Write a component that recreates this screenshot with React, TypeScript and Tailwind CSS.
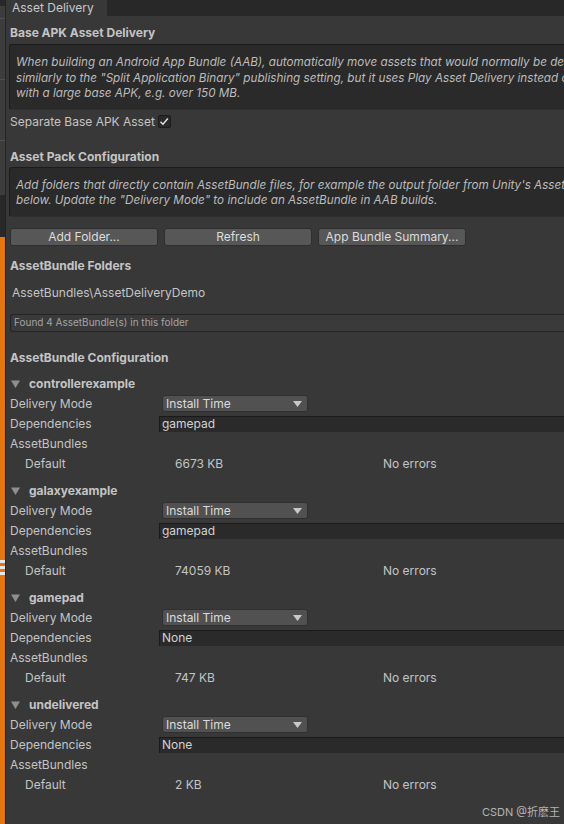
import React from 'react';

const font = { fontFamily: 'Inter, "Noto Sans", "Noto Sans CJK SC", sans-serif' };

type Bundle = { name: string; deps: string; size: string };

const bundles: Bundle[] = [
  { name: 'controllerexample', deps: 'gamepad', size: '6673 KB' },
  { name: 'galaxyexample', deps: 'gamepad', size: '74059 KB' },
  { name: 'gamepad', deps: 'None', size: '747 KB' },
  { name: 'undelivered', deps: 'None', size: '2 KB' },
];

function Heading({ children, className = '' }: { children: React.ReactNode; className?: string }) {
  return (
    <div className={`h-[18px] flex items-center pl-[4px] text-[12px] font-bold text-[#c4c4c4] whitespace-nowrap ${className}`}>
      {children}
    </div>
  );
}

function HelpBox({ lines, className = '' }: { lines: string[]; className?: string }) {
  return (
    <div
      className={`ml-[3px] rounded-l-[3px] bg-[#2a2a2a] border-t border-l border-[#1c1c1c] border-b-[#2f2f2f] border-b pt-[10px] pb-[7px] pl-[6px] overflow-hidden ${className}`}
    >
      {lines.map((l) => (
        <div key={l} className="h-[15.5px] leading-[15.5px] text-[11.7px] italic text-[#bcbcbc] whitespace-nowrap">
          {l}
        </div>
      ))}
    </div>
  );
}

function Button({ label }: { label: string }) {
  return (
    <div className="w-[148px] h-[18px] rounded-[3px] bg-[#575757] border border-[#2e2e2e] flex items-center justify-center text-[12px] text-[#dcdcdc]">
      {label}
    </div>
  );
}

function Row({ label, children }: { label: string; children?: React.ReactNode }) {
  return (
    <div className="h-[20px] flex items-center text-[12px] text-[#c4c4c4] whitespace-nowrap">
      <div className="w-[153px] pl-[4px] shrink-0">{label}</div>
      {children}
    </div>
  );
}

function BundleGroup({ b }: { b: Bundle }) {
  return (
    <div className="mt-[7px]">
      <div className="h-[20px] flex items-center text-[12px] font-bold text-[#c4c4c4]">
        <svg width="9" height="8" viewBox="0 0 9 8" className="ml-[5px] mr-[9px]">
          <path d="M0 0.5 H9 L4.5 8 Z" fill="#8f8f8f" />
        </svg>
        {b.name}
      </div>
      <Row label="Delivery Mode">
        <div className="ml-[3px] w-[146px] h-[17px] rounded-[3px] bg-[#515151] border border-[#303030] flex items-center justify-between pl-[3px] pr-[5px] text-[#dcdcdc]">
          <span>Install Time</span>
          <svg width="9" height="6" viewBox="0 0 9 6">
            <path d="M0 0 H9 L4.5 6 Z" fill="#c8c8c8" />
          </svg>
        </div>
      </Row>
      <Row label="Dependencies">
        <div className="flex-1 h-[16px] bg-[#2a2a2a] border-t border-l border-[#1a1a1a] flex items-center pl-[2px] text-[#d2d2d2]">
          {b.deps}
        </div>
      </Row>
      <Row label="AssetBundles" />
      <div className="h-[20px] flex items-center text-[12px] text-[#c4c4c4] whitespace-nowrap">
        <div className="w-[169px] pl-[19px] shrink-0">Default</div>
        <div className="w-[208px] shrink-0">{b.size}</div>
        <div>No errors</div>
      </div>
    </div>
  );
}

export default function App() {
  return (
    <div className="w-[564px] h-[824px] overflow-hidden flex bg-[#383838] relative" style={font}>
      {/* neighbouring window edge */}
      <div className="w-[6px] shrink-0 flex flex-col border-r border-[#232323]">
        <div className="h-[6px] bg-[#282828]" />
        <div className="h-[189px] bg-[#3d3d3d] flex flex-col">
          <div className="h-[12px]" />
          <div className="h-px bg-[#505050]" />
          <div className="h-[60px]" />
          <div className="h-px bg-[#505050]" />
          <div className="h-[60px]" />
          <div className="h-px bg-[#505050]" />
        </div>
        <div className="h-[42px] bg-[#282828]" />
        <div className="flex-1 bg-[#e3760f] flex flex-col">
          <div className="h-[323px]" />
          <div className="h-[3px] bg-[#e8e8e8]" />
          <div className="h-[3px]" />
          <div className="h-[3px] bg-[#e8e8e8]" />
          <div className="h-[3px]" />
          <div className="h-[3px] bg-[#e8e8e8]" />
        </div>
      </div>

      <div className="flex-1 flex flex-col min-w-0">
        {/* tab bar */}
        <div className="h-[16px] shrink-0 bg-[#282828] flex">
          <div className="w-[101px] bg-[#383838] pl-[6px] text-[12px] leading-[16px] text-[#c8c8c8] whitespace-nowrap">
            Asset Delivery
          </div>
        </div>

        <Heading className="mt-[8px]">Base APK Asset Delivery</Heading>
        <HelpBox
          className="mt-[2px]"
          lines={[
            'When building an Android App Bundle (AAB), automatically move assets that would normally be delivered in the base APK into a separate asset pack. This behaves',
            'similarly to the "Split Application Binary" publishing setting, but it uses Play Asset Delivery instead of APK expansion files. Recommended for apps',
            'with a large base APK, e.g. over 150 MB.',
          ]}
        />
        <div className="mt-[3px] h-[18px] flex items-center pl-[4px] text-[12px] text-[#c4c4c4] whitespace-nowrap">
          Separate Base APK Asset
          <div className="ml-[3px] w-[13px] h-[13px] rounded-[2px] bg-[#2a2a2a] border border-[#1b1b1b] flex items-center justify-center">
            <svg width="10" height="9" viewBox="0 0 10 9">
              <path d="M1.5 4.8 L4 7.2 L8.8 1.5" stroke="#e4e4e4" strokeWidth="1.4" fill="none" />
            </svg>
          </div>
        </div>

        <Heading className="mt-[17px]">Asset Pack Configuration</Heading>
        <HelpBox
          className="mt-[1px]"
          lines={[
            "Add folders that directly contain AssetBundle files, for example the output folder from Unity's AssetBundle Browser. The AssetBundles found are listed",
            'below. Update the "Delivery Mode" to include an AssetBundle in AAB builds.',
          ]}
        />
        <div className="mt-[11px] flex gap-[6px] pl-[4px]">
          <Button label="Add Folder..." />
          <Button label="Refresh" />
          <Button label="App Bundle Summary..." />
        </div>

        <Heading className="mt-[11px]">AssetBundle Folders</Heading>
        <div className="mt-[9px] h-[18px] flex items-center pl-[6px] text-[12px] text-[#c4c4c4] whitespace-nowrap">
          AssetBundles\AssetDeliveryDemo
        </div>
        <div className="mt-[12px] ml-[4px] h-[18px] rounded-l-[3px] bg-[#3a3a3a] border-t border-l border-b border-[#242424] flex items-center pl-[3px] text-[10px] text-[#a4a4a4] whitespace-nowrap">
          Found 4 AssetBundle(s) in this folder
        </div>

        <Heading className="mt-[17px]">AssetBundle Configuration</Heading>
        {bundles.map((b) => (
          <BundleGroup key={b.name} b={b} />
        ))}
      </div>

      <div className="absolute right-[4px] bottom-[4px] text-[11px] text-[#b4b4b4] whitespace-nowrap">
        CSDN @折麽王
      </div>
    </div>
  );
}
